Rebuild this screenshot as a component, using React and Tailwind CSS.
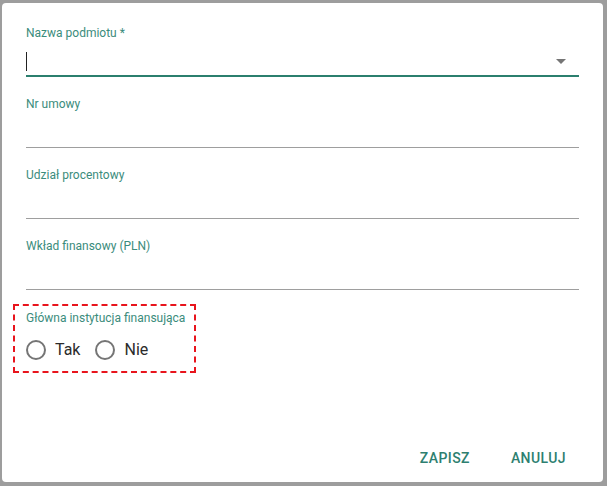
import React from 'react';

// Text field with label above and underline
const Field = ({ label, focused, select, last }) => (
  <div className={last ? 'mb-[14px]' : 'mb-[19px]'}>
    <label className="block text-xs leading-4 text-[#3b8c7c]">{label}</label>
    <div
      className={`relative h-9 flex items-end pb-1 ${
        focused ? 'border-b-2 border-[#2b7f6e]' : 'border-b border-[#9e9e9e]'
      }`}
    >
      {focused && <span className="block w-px h-[19px] bg-[#222]" />}
      {select && (
        <svg viewBox="0 0 24 24" className="absolute right-[6px] top-[8px] w-6 h-6 fill-[#757575]">
          <path d="M7 10l5 5 5-5z" />
        </svg>
      )}
    </div>
  </div>
);

const Radio = ({ label }) => (
  <label className="flex items-center h-[42px] cursor-pointer">
    <span className="w-5 h-5 rounded-full border-2 border-[#757575]" />
    <span className="ml-[9px] text-base text-[#2b2b2b]">{label}</span>
  </label>
);

export default function App() {
  return (
    <div
      className="w-[607px] h-[486px] bg-[#9d9d9d] pt-[3px] pl-[2px] overflow-hidden"
      style={{ fontFamily: 'Roboto, "Liberation Sans", sans-serif' }}
    >
      <div className="w-[601px] h-[479px] bg-white rounded-[4px] flex flex-col">
        <div className="px-6 pt-[22px]">
          <Field label="Nazwa podmiotu *" focused select />
          <Field label="Nr umowy" />
          <Field label="Udział procentowy" />
          <Field label="Wkład finansowy (PLN)" last />

          <div className="ml-[-13px] w-[183px] h-[69px] border-2 border-dashed border-[#e8141c] pl-[11px] pt-1">
            <div className="text-xs leading-4 text-[#3b8c7c]">Główna instytucja finansująca</div>
            <div className="flex items-center mt-[3px] gap-[15px]">
              <Radio label="Tak" />
              <Radio label="Nie" />
            </div>
          </div>
        </div>

        <div className="mt-auto flex justify-end gap-[25px] pr-[29px] pb-[6px]">
          <button className="h-9 px-2 text-sm font-medium uppercase tracking-[0.03em] text-[#2e7f70]">
            Zapisz
          </button>
          <button className="h-9 px-2 text-sm font-medium uppercase tracking-[0.03em] text-[#2e7f70]">
            Anuluj
          </button>
        </div>
      </div>
    </div>
  );
}
